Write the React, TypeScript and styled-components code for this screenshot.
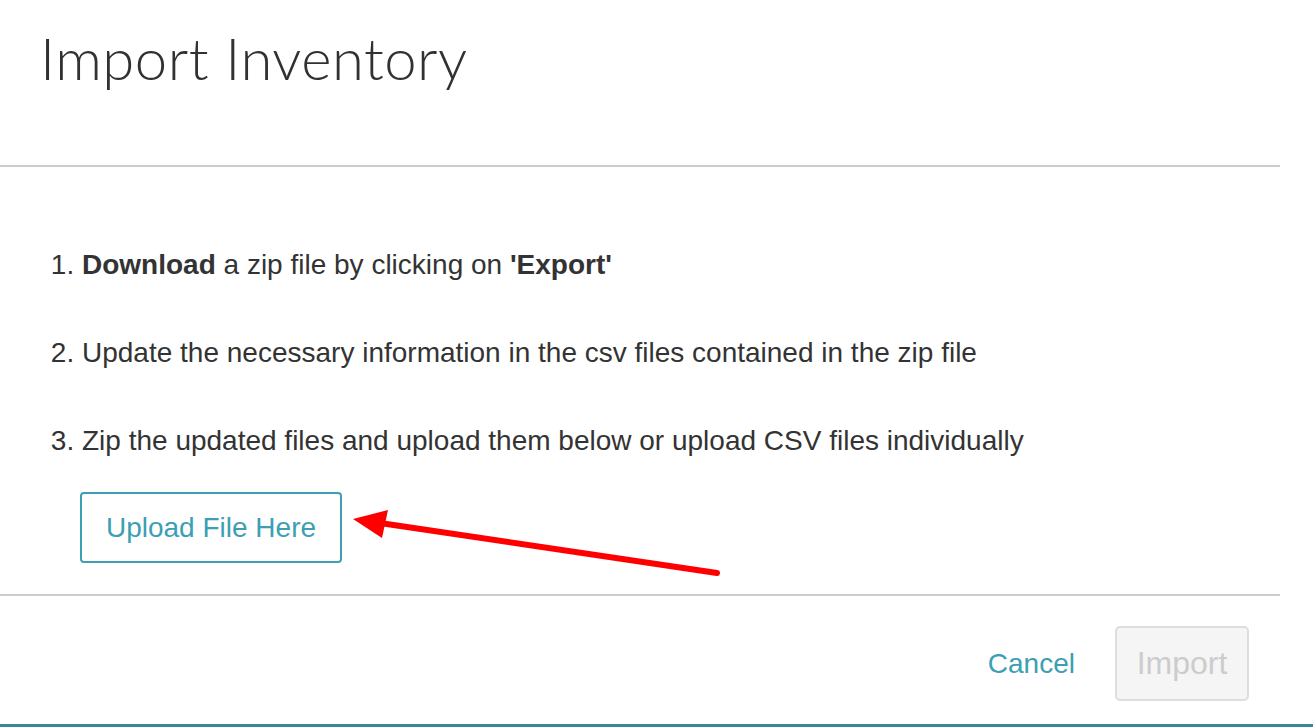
import styled, { createGlobalStyle } from "styled-components";

const GlobalStyle = createGlobalStyle`
  html, body {
    margin: 0;
    padding: 0;
    background: #ffffff;
  }
`;

const steps = [
  <>
    <b>Download</b> a zip file by clicking on <b>'Export'</b>
  </>,
  <>Update the necessary information in the csv files contained in the zip file</>,
  <>Zip the updated files and upload them below or upload CSV files individually</>,
];

const App = () => {
  return (
    <>
      <GlobalStyle />
      <Frame>
        <Modal>
          <Header>
            <Title>Import Inventory</Title>
          </Header>
          <Body>
            <Steps>
              {steps.map((step, i) => (
                <Step key={i}>{step}</Step>
              ))}
            </Steps>
            <UploadButton type="button">Upload File Here</UploadButton>
          </Body>
          <Footer>
            <LinkButton type="button">Cancel</LinkButton>
            <PrimaryButton type="button" disabled>
              Import
            </PrimaryButton>
          </Footer>
        </Modal>
        <Arrow width="380" height="70" viewBox="0 0 380 70">
          <line x1="367" y1="63" x2="30" y2="13" stroke="#ff0000" strokeWidth="6" strokeLinecap="round" />
          <polygon points="3,9 38,0 32,28" fill="#ff0000" />
        </Arrow>
      </Frame>
    </>
  );
};

const Frame = styled.div`
  position: relative;
  width: 100%;
  height: 727px;
  box-sizing: border-box;
  border-bottom: 3px solid #3a8799;
  overflow: hidden;
`;

const Modal = styled.div`
  width: 1280px;
  display: flex;
  flex-direction: column;
`;

const Header = styled.div`
  height: 167px;
  box-sizing: border-box;
  border-bottom: 2px solid #cccccc;
  padding: 22px 0 0 40px;
`;

const Title = styled.h1`
  margin: 0;
  font-family: "Lato", "Open Sans", sans-serif;
  font-weight: 300;
  font-size: 58px;
  line-height: 72px;
  color: #313131;
  letter-spacing: 0.5px;
`;

const Body = styled.div`
  height: 429px;
  box-sizing: border-box;
  border-bottom: 2px solid #cccccc;
  padding: 84px 0 0 80px;
`;

const Steps = styled.ol`
  margin: 0;
  padding: 0 0 0 2px;
  list-style-position: outside;
  font-family: "Liberation Sans", Arial, sans-serif;
  font-size: 28px;
  color: #333333;
`;

const Step = styled.li`
  line-height: 28px;
  margin-bottom: 60px;

  &:last-child {
    margin-bottom: 37px;
  }

  b {
    font-weight: 700;
  }
`;

const UploadButton = styled.button`
  width: 262px;
  height: 71px;
  box-sizing: border-box;
  border: 2px solid #3c9fb4;
  border-radius: 4px;
  background: #ffffff;
  color: #3c9fb4;
  font-family: "Liberation Sans", Arial, sans-serif;
  font-size: 28px;
  padding: 0;
  cursor: pointer;
`;

const Footer = styled.div`
  display: flex;
  justify-content: flex-end;
  align-items: center;
  gap: 40px;
  padding: 30px 31px 0 0;
`;

const LinkButton = styled.button`
  border: none;
  background: none;
  padding: 0;
  color: #3c9fb4;
  font-family: "Liberation Sans", Arial, sans-serif;
  font-size: 28px;
  cursor: pointer;
`;

const PrimaryButton = styled.button`
  width: 134px;
  height: 75px;
  box-sizing: border-box;
  border: 2px solid #dddddd;
  border-radius: 5px;
  background: #f5f5f5;
  color: #cccccc;
  font-family: "Liberation Sans", Arial, sans-serif;
  font-size: 32px;
  padding: 0;
`;

const Arrow = styled.svg`
  position: absolute;
  left: 350px;
  top: 510px;
`;

export default App;
